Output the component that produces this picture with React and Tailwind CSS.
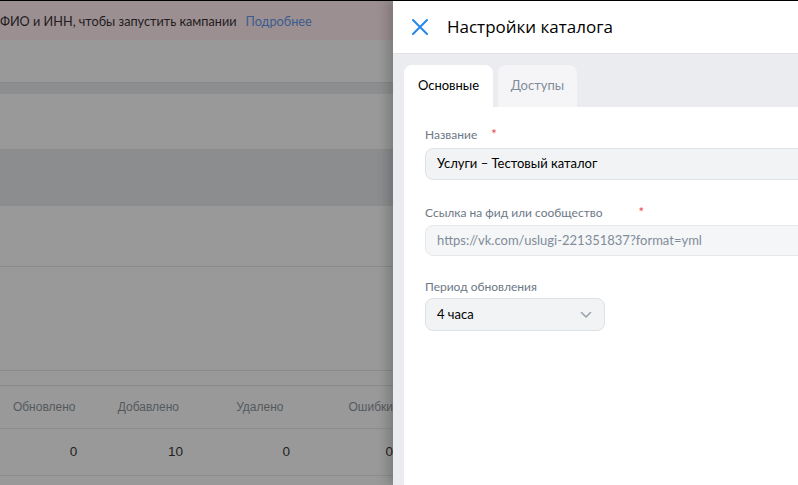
import React from "react";

const font = { fontFamily: 'Lato, "Open Sans", Arial, sans-serif' };
const tableFont = { fontFamily: '"Liberation Sans", Arial, sans-serif' };

function Field({ label, star, starOffset, children }) {
  return (
    <div className="flex flex-col">
      <div className="flex items-center h-[20px] text-[12px] text-[#6d7885]">
        <span>{label}</span>
        {star && <span className={`text-[#e64646] text-[13px] ${starOffset}`}>*</span>}
      </div>
      {children}
    </div>
  );
}

export default function App() {
  return (
    <div className="w-[798px] h-[485px] overflow-hidden flex bg-[#999999] border-t border-black" style={font}>
      {/* затемнённая страница */}
      <div className="flex-1 flex flex-col overflow-hidden">
        <div className="h-[39px] shrink-0 bg-[#9c8f91] flex items-center whitespace-nowrap text-[12.7px] text-[#221c1e] pt-[2px]">
          <span>ФИО и ИНН, чтобы запустить кампании</span>
          <span className="ml-[9px] text-[#3b5c8e]">Подробнее</span>
        </div>
        <div className="h-[42px] shrink-0" />
        <div className="h-[12px] shrink-0 bg-[#8d8e90] border-t border-[#878889]" />
        <div className="h-[55px] shrink-0" />
        <div className="h-[57px] shrink-0 bg-[#8c8d8f] border-t border-[#8a8b8d]" />
        <div className="h-[61px] shrink-0 border-b border-[#8a8a8a]" />
        <div className="h-[104px] shrink-0 border-b border-[#8a8a8a]" />
        <div className="h-[15px] shrink-0 border-b border-[#8a8a8a]" />
        <div className="h-[43px] shrink-0 flex items-center border-b border-[#8d8d8d] text-[12px] text-[#55595e] whitespace-nowrap" style={tableFont}>
          <div className="w-[78px] text-right">Обновлено</div>
          <div className="w-[107px] text-right">Добавлено</div>
          <div className="w-[108px] text-right">Удалено</div>
          <div className="ml-[65px]">Ошибки</div>
        </div>
        <div className="h-[47px] shrink-0 flex items-center border-b border-[#8d8d8d] text-[13.5px] text-[#1f1f1f] whitespace-nowrap" style={tableFont}>
          <div className="w-[78px] text-right">0</div>
          <div className="w-[107px] text-right">10</div>
          <div className="w-[108px] text-right">0</div>
          <div className="w-[104px] text-right">0</div>
        </div>
      </div>

      {/* боковая панель */}
      <div className="w-[405px] shrink-0 flex flex-col bg-[#ebecf0] shadow-[-6px_0_10px_rgba(0,0,0,0.18)] relative">
        <div className="h-[53px] shrink-0 bg-white border-b border-[#e1e3e6] flex items-center pl-[19px]">
          <svg width="16" height="16" viewBox="0 0 16 16" className="shrink-0">
            <path d="M1 1L15 15M15 1L1 15" stroke="#2688eb" strokeWidth="2" strokeLinecap="round" />
          </svg>
          <span className="ml-[19px] text-[17px] text-[#000000] whitespace-nowrap" style={{ fontFamily: '"Open Sans", sans-serif' }}>
            Настройки каталога
          </span>
        </div>
        <div className="flex gap-[5px] pl-[11px] pt-[11px] shrink-0">
          <div className="h-[42px] w-[89px] bg-white rounded-t-[8px] flex items-center justify-center text-[13px] text-black">Основные</div>
          <div className="h-[42px] w-[79px] bg-[#f5f5f7] rounded-t-[8px] flex items-center justify-center text-[13px] text-[#818c99]">Доступы</div>
        </div>
        <div className="flex-1 ml-[11px] bg-white pl-[21px] pt-[18px] flex flex-col whitespace-nowrap">
          <Field label="Название" star starOffset="ml-[14px]">
            <div className="mt-[3px] h-[32px] w-[400px] bg-[#f2f3f5] border border-[#dce1e6] rounded-[8px] flex items-center pl-[11px] text-[13px] text-black">
              Услуги – Тестовый каталог
            </div>
          </Field>
          <div className="mt-[23px]">
            <Field label="Ссылка на фид или сообщество" star starOffset="ml-[36px]">
              <div className="mt-[2px] h-[31px] w-[400px] bg-[#f5f6f8] border border-[#e7e8ec] rounded-[8px] flex items-center pl-[11px] text-[13px] text-[#818c99]">
                https://vk.com/uslugi-221351837?format=yml
              </div>
            </Field>
          </div>
          <div className="mt-[21px]">
            <Field label="Период обновления">
              <div className="mt-[1px] h-[33px] w-[180px] bg-[#f2f3f5] border border-[#dce1e6] rounded-[8px] flex items-center justify-between pl-[11px] pr-[12px] text-[13px] text-black">
                <span>4 часа</span>
                <svg width="12" height="8" viewBox="0 0 12 8">
                  <path d="M1.5 1.5L6 6L10.5 1.5" stroke="#99a2ad" strokeWidth="1.6" fill="none" strokeLinecap="round" strokeLinejoin="round" />
                </svg>
              </div>
            </Field>
          </div>
        </div>
      </div>
    </div>
  );
}
